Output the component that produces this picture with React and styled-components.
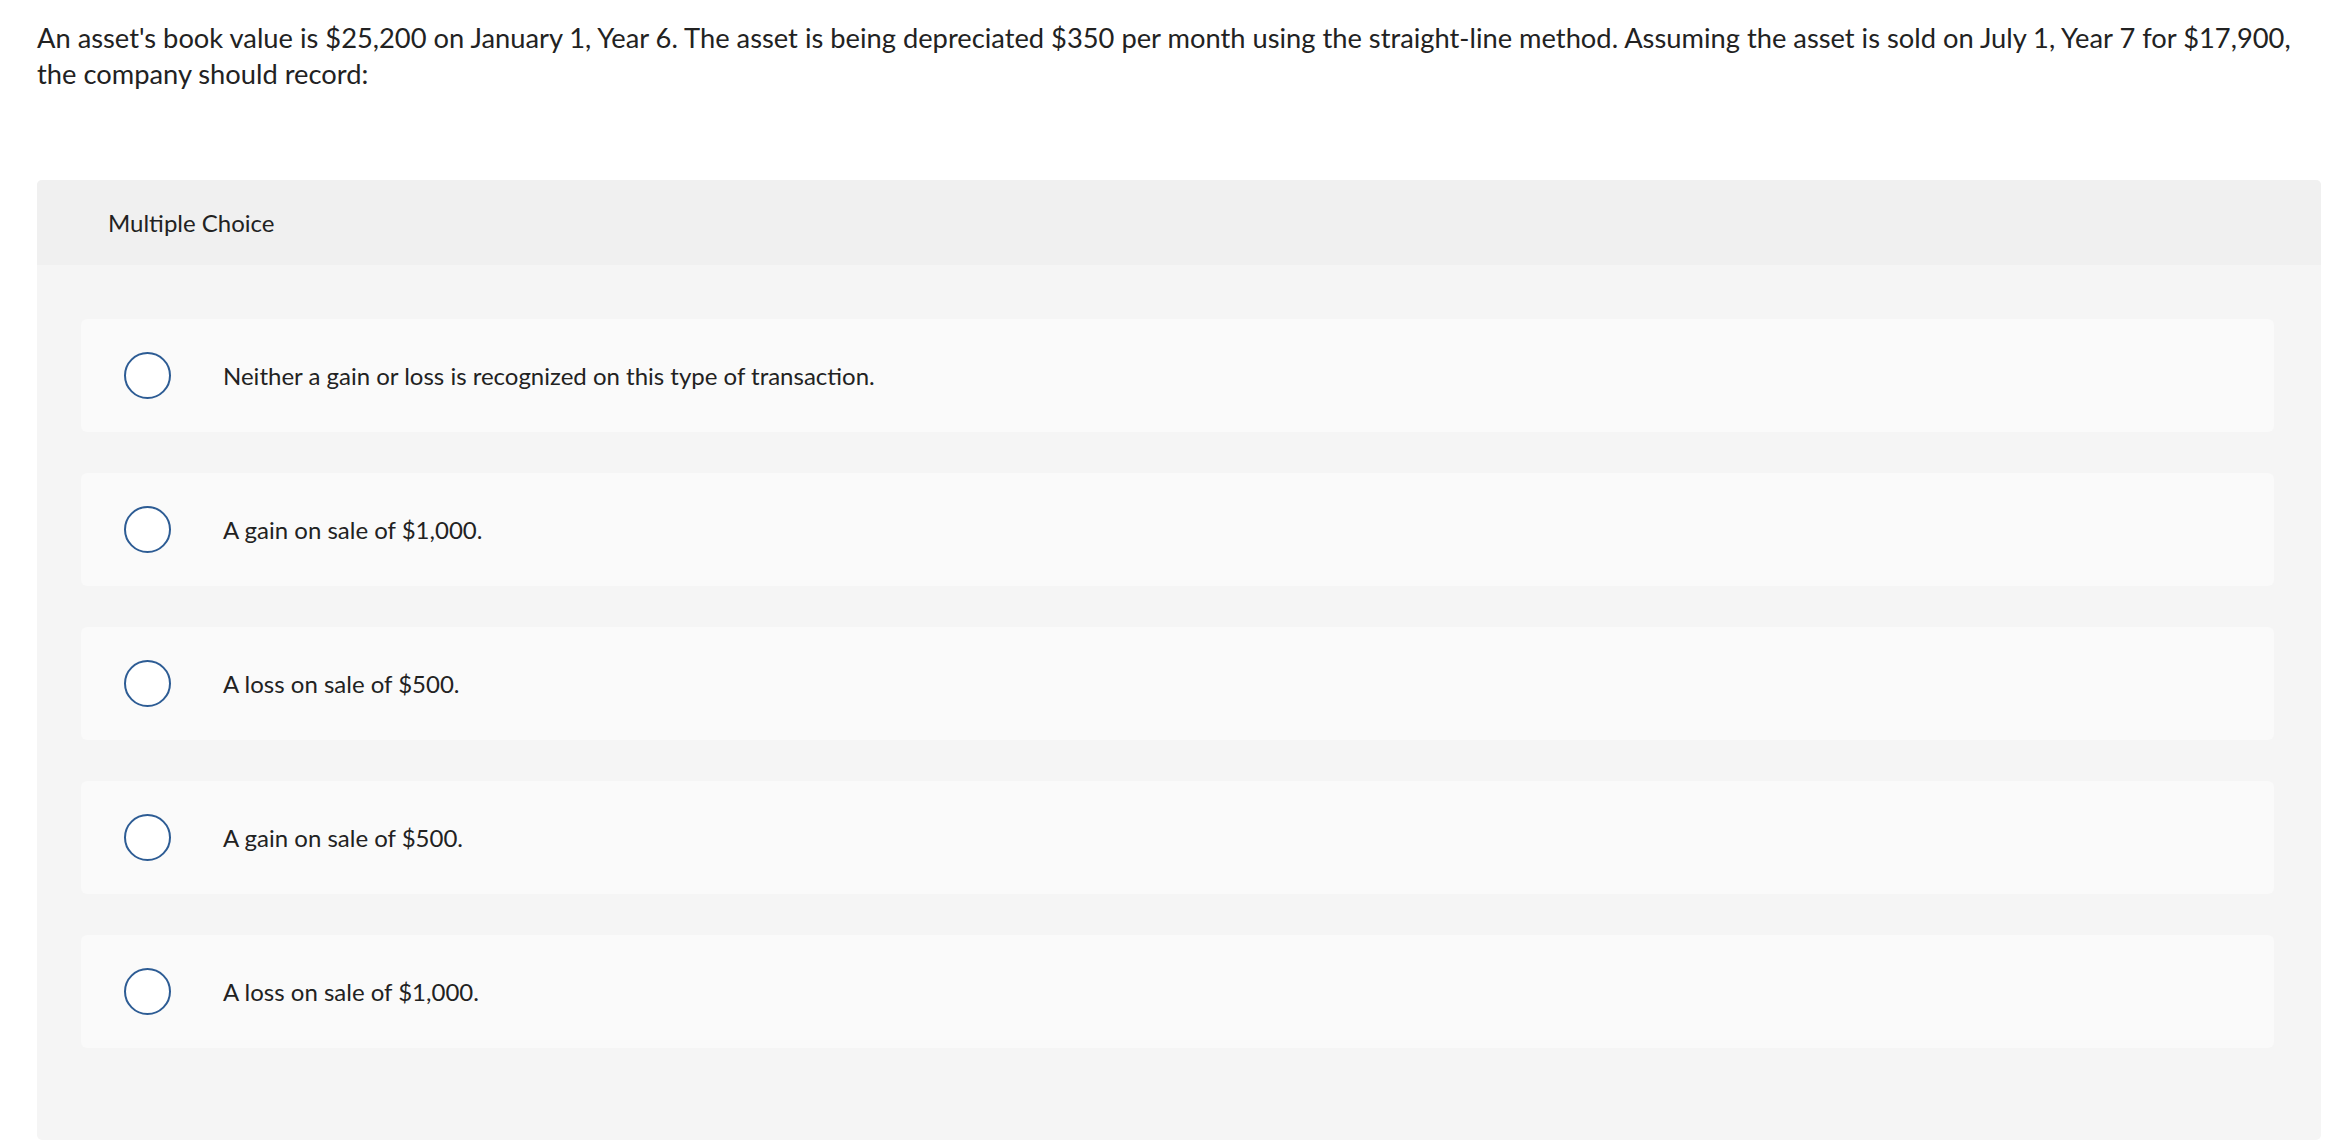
import styled, { createGlobalStyle } from "styled-components";

const GlobalStyle = createGlobalStyle`
  body {
    margin: 0;
    background: #ffffff;
    font-family: Lato, "Liberation Sans", sans-serif;
    color: #222222;
  }
`;

const choices = [
  "Neither a gain or loss is recognized on this type of transaction.",
  "A gain on sale of $1,000.",
  "A loss on sale of $500.",
  "A gain on sale of $500.",
  "A loss on sale of $1,000.",
];

function App() {
  return (
    <>
      <GlobalStyle />
      <Page>
        <Question>
          An asset's book value is $25,200 on January 1, Year 6. The asset is
          being depreciated $350 per month using the straight-line method.
          Assuming the asset is sold on July 1, Year 7 for $17,900, the company
          should record:
        </Question>

        <Panel>
          <PanelHeader>Multiple Choice</PanelHeader>
          <ChoiceList>
            {choices.map((text) => (
              <Choice key={text}>
                <Radio />
                <ChoiceText>{text}</ChoiceText>
              </Choice>
            ))}
          </ChoiceList>
        </Panel>
      </Page>
    </>
  );
}

export default App;

const Page = styled.div`
  padding: 20px 25px 8px 37px;
`;

const Question = styled.p`
  margin: 0 0 88px;
  font-size: 27.3px;
  line-height: 36px;
  color: #222222;
`;

const Panel = styled.div`
  background: #f5f5f5;
  border-radius: 5px;
  overflow: hidden;
`;

const PanelHeader = styled.div`
  height: 85px;
  display: flex;
  align-items: center;
  padding-left: 71px;
  background: #f0f0f0;
  font-size: 24px;
  color: #222222;
`;

const ChoiceList = styled.div`
  display: flex;
  flex-direction: column;
  gap: 41px;
  padding: 54px 47px 92px 44px;
`;

const Choice = styled.div`
  height: 113px;
  display: flex;
  align-items: center;
  gap: 52px;
  padding-left: 43px;
  background: #fafafa;
  border-radius: 6px;
`;

const Radio = styled.span`
  width: 43px;
  height: 43px;
  flex-shrink: 0;
  border: 2px solid #2d5c94;
  border-radius: 50%;
  background: #ffffff;
`;

const ChoiceText = styled.span`
  font-size: 24px;
  color: #222222;
`;
